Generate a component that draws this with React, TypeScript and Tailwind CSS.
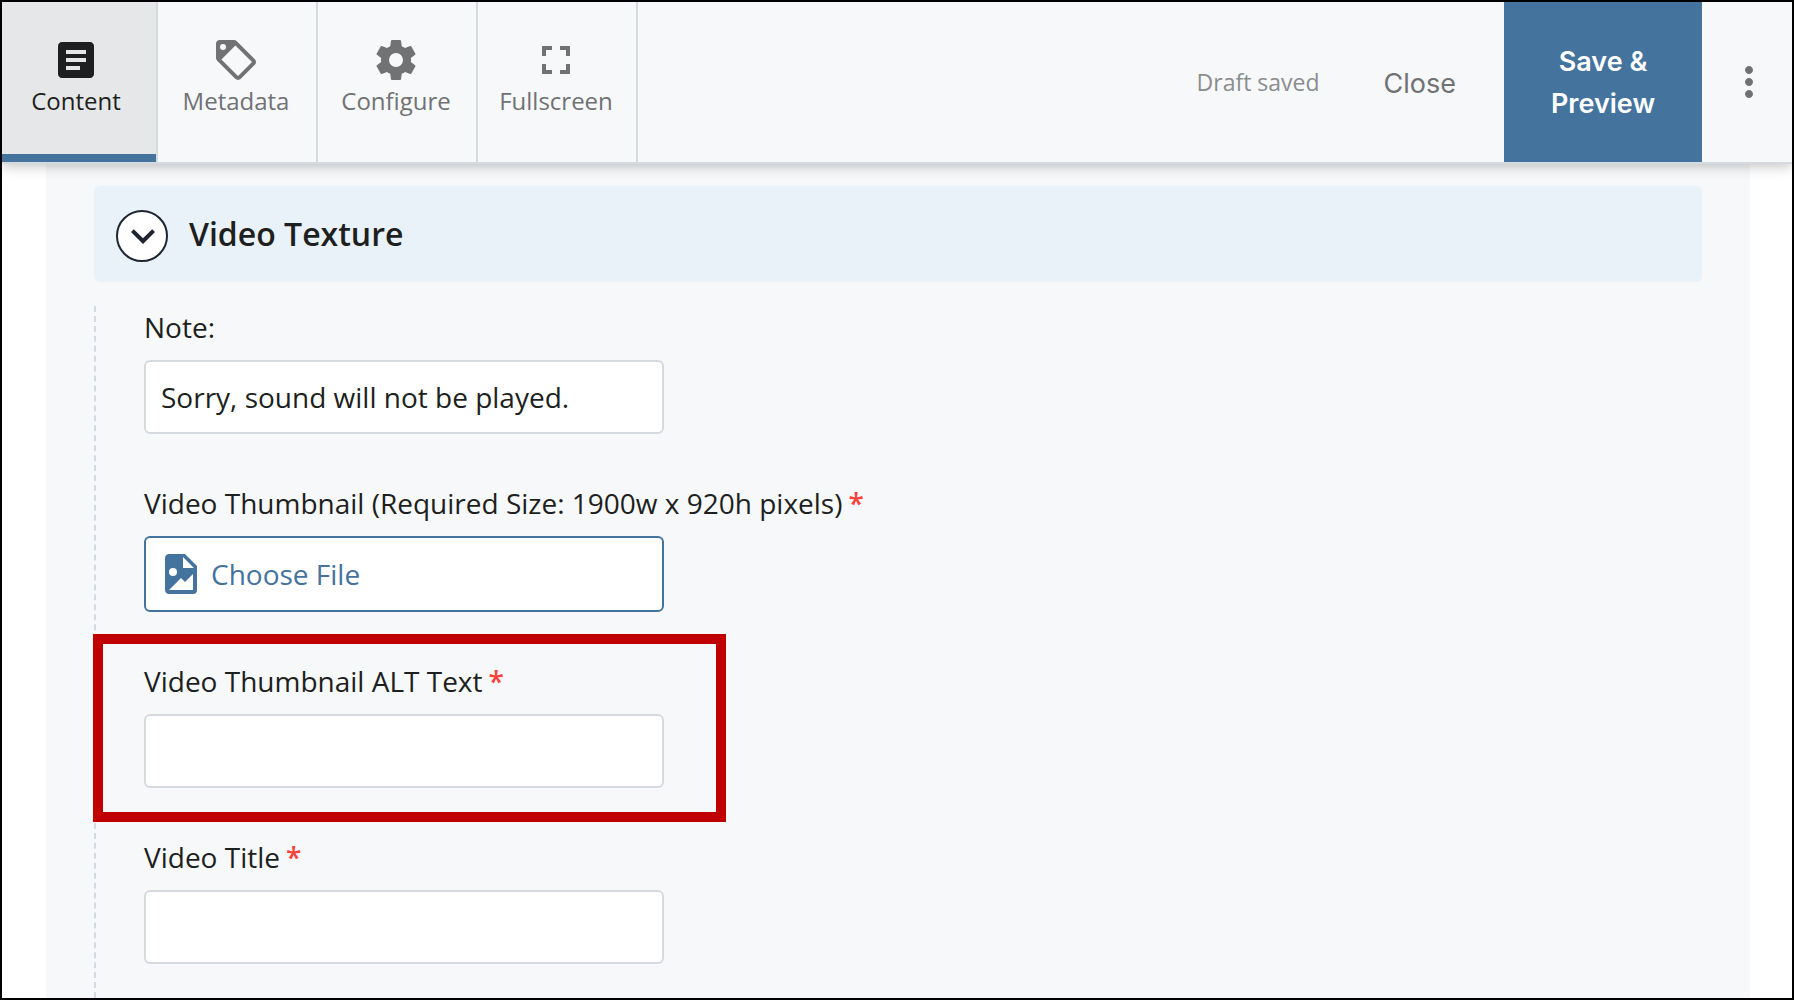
import {ReactNode, useState} from "react";
import {MdArticle, MdFullscreen, MdMoreVert} from "react-icons/md";

interface FieldProps {
    id: string;
    label: string;
    required?: boolean;
    highlighted?: boolean;
    children: ReactNode;
}

const inputClass =
    "block w-full h-[74px] px-[15px] bg-white border-2 border-[#d5dae1] rounded-md text-[28px] text-[#1d1f20] outline-none";

function TagIcon() {
    return (
        <svg className="size-12" viewBox="0 0 24 24" fill="currentColor" aria-hidden="true">
            <path
                fillRule="evenodd"
                d="M21.41 11.58l-9-9A2 2 0 0 0 11 2H4a2 2 0 0 0-2 2v7c0 .53.21 1.04.59 1.41l8.99 9c.37.37.87.59 1.42.59s1.05-.22 1.41-.59l7-7c.37-.36.59-.86.59-1.41 0-.56-.23-1.06-.59-1.42zM13 20l-8.29-8.29 7-7L20 13zM5.5 4a1.5 1.5 0 1 1 0 3 1.5 1.5 0 0 1 0-3z"
            />
        </svg>
    );
}

function GearIcon() {
    return (
        <svg className="size-12" viewBox="0 0 24 24" fill="currentColor" aria-hidden="true">
            <path d="M12,15.5A3.5,3.5 0 0,1 8.5,12A3.5,3.5 0 0,1 12,8.5A3.5,3.5 0 0,1 15.5,12A3.5,3.5 0 0,1 12,15.5M19.43,12.97C19.47,12.65 19.5,12.33 19.5,12C19.5,11.67 19.47,11.34 19.43,11L21.54,9.37C21.73,9.22 21.78,8.95 21.66,8.73L19.66,5.27C19.54,5.05 19.27,4.96 19.05,5.05L16.56,6.05C16.04,5.66 15.5,5.32 14.87,5.07L14.5,2.42C14.46,2.18 14.25,2 14,2H10C9.75,2 9.54,2.18 9.5,2.42L9.13,5.07C8.5,5.32 7.96,5.66 7.44,6.05L4.95,5.05C4.73,4.96 4.46,5.05 4.34,5.27L2.34,8.73C2.21,8.95 2.27,9.22 2.46,9.37L4.57,11C4.53,11.34 4.5,11.67 4.5,12C4.5,12.33 4.53,12.65 4.57,12.97L2.46,14.63C2.27,14.78 2.21,15.05 2.34,15.27L4.34,18.73C4.46,18.95 4.73,19.03 4.95,18.95L7.44,17.94C7.96,18.34 8.5,18.68 9.13,18.93L9.5,21.58C9.54,21.82 9.75,22 10,22H14C14.25,22 14.46,21.82 14.5,21.58L14.87,18.93C15.5,18.67 16.04,18.34 16.56,17.94L19.05,18.95C19.27,19.03 19.54,18.95 19.66,18.73L21.66,15.27C21.78,15.05 21.73,14.78 21.54,14.63L19.43,12.97Z" />
        </svg>
    );
}

function FileImageIcon() {
    return (
        <svg className="size-12" viewBox="0 0 24 24" fill="currentColor" aria-hidden="true">
            <path d="M13,9H18.5L13,3.5V9M6,2H14L20,8V20A2,2 0 0,1 18,22H6C4.89,22 4,21.1 4,20V4C4,2.89 4.89,2 6,2M6,20H15L18,20V12L14,16L12,14L6,20M8,9A2,2 0 0,0 6,11A2,2 0 0,0 8,13A2,2 0 0,0 10,11A2,2 0 0,0 8,9Z" />
        </svg>
    );
}

const tabs = [
    {name: "Content", icon: <MdArticle className="size-12" />},
    {name: "Metadata", icon: <TagIcon />},
    {name: "Configure", icon: <GearIcon />},
    {name: "Fullscreen", icon: <MdFullscreen className="size-12" />},
];

function Field({id, label, required, highlighted, children}: FieldProps) {
    return (
        <div className="relative w-[520px] mb-12">
            <label
                htmlFor={id}
                className="block mb-3 text-[28px] leading-[42px] whitespace-nowrap"
            >
                {label}
                {required && <span className="ml-1.5 font-semibold text-[#f9423a]">*</span>}
            </label>
            {children}
            {highlighted && (
                <div className="absolute -top-[26px] -bottom-[34px] -left-[51px] -right-[62px] border-10 border-[#c00000] pointer-events-none" />
            )}
        </div>
    );
}

export default function App() {
    const [activeTab, setActiveTab] = useState("Content");
    const [open, setOpen] = useState(true);

    return (
        <div className="flex flex-col h-screen overflow-hidden border-2 border-black bg-white font-['Open_Sans',sans-serif] text-[#1d1f20]">
            <header className="relative z-10 flex shrink-0 h-[162px] bg-[#f7f8fa] border-b-2 border-[#d5dae1] shadow-[0_2px_12px_rgba(0,0,0,0.25)]">
                <nav className="flex">
                    {tabs.map((tab) => (
                        <button
                            key={tab.name}
                            onClick={() => setActiveTab(tab.name)}
                            className={`flex flex-col items-center w-40 pt-[34px] pr-0.5 border-r-2 border-[#d5dae1] text-2xl leading-[34px] first:w-[156px] first:pr-1.5 ${
                                activeTab === tab.name
                                    ? "bg-[#e6e7e8] text-[#1d1f20] shadow-[inset_0_-8px_0_#44739e]"
                                    : "text-[#707274]"
                            }`}
                        >
                            {tab.icon}
                            {tab.name}
                        </button>
                    ))}
                </nav>

                <div className="flex items-center ml-auto">
                    <span className="text-[23px] text-[#8b8d8f]">Draft saved</span>
                    <button className="h-full pt-1 pl-16 pr-12 font-[Inter,sans-serif] text-[27px] text-[#707274]">
                        Close
                    </button>
                    <button className="w-[198px] h-full px-10 pt-0.5 bg-[#44739e] font-[Inter,sans-serif] font-semibold text-[27px] leading-[42px] text-white">
                        Save &amp; Preview
                    </button>
                    <button
                        aria-label="More options"
                        className="flex items-center justify-center w-[90px] h-full pl-1 text-[#707274]"
                    >
                        <MdMoreVert className="size-12" />
                    </button>
                </div>
            </header>

            <main className="flex flex-col flex-1 min-h-0 ml-11 mr-[42px] px-12 pt-[22px] bg-[#f7f8fa]">
                <div className="flex items-center shrink-0 gap-[21px] h-24 px-[22px] bg-[#e9f1f9] rounded-md">
                    <button
                        aria-label="Toggle Video Texture"
                        aria-expanded={open}
                        onClick={() => setOpen(!open)}
                        className="flex items-center justify-center size-[52px] mt-1 pl-0.5 bg-white border-2 border-[#1f2530] rounded-full text-[#1f2530]"
                    >
                        <svg className="size-12 shrink-0" viewBox="0 0 24 24" fill="currentColor" aria-hidden="true">
                            <path d="M7.41,8.58L12,13.17L16.59,8.58L18,10L12,16L6,10L7.41,8.58Z" />
                        </svg>
                    </button>
                    <h2 className="text-[32px] font-semibold">Video Texture</h2>
                </div>

                {open && (
                    <div className="flex-1 min-h-0 mt-6 pl-12 border-l-2 border-dashed border-[#d5dae1]">
                        <Field id="note" label="Note:">
                            <input
                                id="note"
                                type="text"
                                defaultValue="Sorry, sound will not be played."
                                className={inputClass}
                            />
                        </Field>
                        <Field
                            id="thumbnail"
                            label="Video Thumbnail (Required Size: 1900w x 920h pixels)"
                            required
                        >
                            <button
                                id="thumbnail"
                                className="flex items-center w-full h-[76px] gap-1.5 px-[11px] bg-white border-2 border-[#44739e] rounded-md text-[28px] text-[#44739e]"
                            >
                                <FileImageIcon />
                                Choose File
                            </button>
                        </Field>
                        <Field id="alt-text" label="Video Thumbnail ALT Text" required highlighted>
                            <input id="alt-text" type="text" className={inputClass} />
                        </Field>
                        <Field id="title" label="Video Title" required>
                            <input id="title" type="text" className={inputClass} />
                        </Field>
                    </div>
                )}
            </main>
        </div>
    );
}
